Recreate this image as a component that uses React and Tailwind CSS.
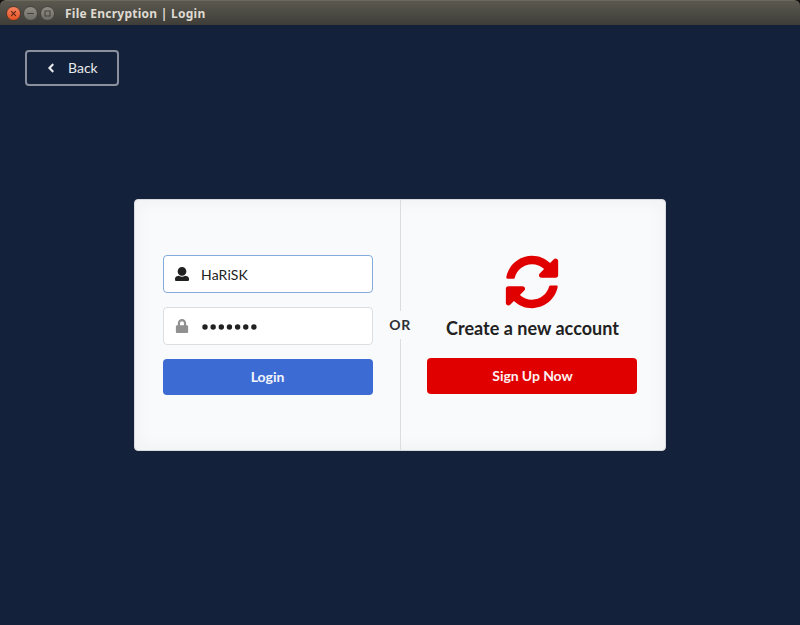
import React from "react";
import { FaAngleLeft, FaLock, FaSyncAlt } from "react-icons/fa";

function WindowButton({ close, children }) {
  return (
    <span
      className={
        "flex size-[15px] items-center justify-center rounded-full border " +
        (close
          ? "border-[#56382c] bg-linear-to-b from-[#f58360] to-[#e4501c]"
          : "border-[#45433d] bg-linear-to-b from-[#918e85] to-[#6e6c65]")
      }
    >
      <svg viewBox="0 0 13 13" className="size-[13px] shrink-0" fill="none" stroke={close ? "#5c2412" : "#45443e"} strokeWidth="1.1">
        {children}
      </svg>
    </span>
  );
}

function TitleBar() {
  return (
    <div className="bg-[#14110f]">
      <header className="flex h-[25px] items-center rounded-t-[6px] border-t border-[#6b685d] bg-linear-to-b from-[#5b594f] to-[#3e3d38] pl-[6px]">
        <div className="flex gap-[2px]">
          <WindowButton close>
            <path d="M4.2 4.2l4.6 4.6M8.8 4.2l-4.6 4.6" />
          </WindowButton>
          <WindowButton>
            <path d="M3.2 6.5h6.6" />
          </WindowButton>
          <WindowButton>
            <path d="M4 4h5v5H4z" />
          </WindowButton>
        </div>
        <h1 className="ml-[10px] mt-px whitespace-nowrap font-['Noto_Sans',sans-serif] text-[12px] font-bold leading-[24px] tracking-[0.25px] text-[#dfdbd2]">
          File Encryption | Login
        </h1>
      </header>
    </div>
  );
}

function UserIcon() {
  return (
    <svg viewBox="0 0 512 512" className="size-[14px]" fill="currentColor">
      <path d="M256 0c88.366 0 160 71.634 160 160s-71.634 160-160 160S96 248.366 96 160 167.634 0 256 0zm183.283 333.821l-71.313-17.828c-74.923 53.89-165.738 41.864-223.94 0l-71.313 17.828C29.981 344.505 0 382.903 0 426.955V464c0 26.51 21.49 48 48 48h416c26.51 0 48-21.49 48-48v-37.045c0-44.052-29.981-82.45-72.717-93.134z" />
    </svg>
  );
}

function PasswordDots() {
  return (
    <svg viewBox="0 0 58 6" className="mt-[2px] h-[6px] w-[58px]" fill="#212121" aria-label="Password">
      {Array.from({ length: 7 }, (_, i) => (
        <circle key={i} cx={4 + i * 8.15} cy="3" r="2.7" />
      ))}
    </svg>
  );
}

function Field({ icon, focused, children }) {
  return (
    <div
      className={
        "flex h-[38px] items-center rounded-[4px] border bg-white pl-[10px] " +
        (focused ? "border-[#82abdc]" : "border-[#dededf]")
      }
    >
      <span className={"flex w-4 justify-center " + (focused ? "text-[#212121]" : "text-[#909090]")}>{icon}</span>
      <span className="ml-[11px] text-[14px] leading-[17px] tracking-[0.15px] text-[#212121]">{children}</span>
    </div>
  );
}

export default function App() {
  return (
    <div className="flex h-[625px] w-[800px] flex-col overflow-hidden bg-[#14213a] font-[Lato,'Liberation_Sans',sans-serif]">
      <TitleBar />
      <main className="flex flex-1 flex-col items-start pl-[25px] pt-[25px]">
        <button className="flex h-[36px] w-[94px] items-center rounded-[4px] border-2 border-[#8a909d] pl-[16.5px] text-[14px] leading-[14px] text-[#e8e9ec]">
          <span className="flex w-[15px] justify-center">
            <FaAngleLeft className="size-[14px]" />
          </span>
          <span className="ml-[9.5px]">Back</span>
        </button>

        <section className="ml-[109px] mt-[113px] flex h-[252px] w-[532px] rounded-[4px] border border-[#d8dadd] bg-[#f9fafc] shadow-[inset_0_0_18px_rgba(34,36,38,0.05)]">
          <form className="flex w-[238px] flex-col pl-[28px] pt-[55px]">
            <Field focused icon={<UserIcon />}>
              HaRiSK
            </Field>
            <div className="mt-[14px]">
              <Field icon={<FaLock className="size-[14px]" />}>
                <PasswordDots />
              </Field>
            </div>
            <button type="button" className="mt-[14px] h-[36px] rounded-[4px] bg-[#3d6bd4] pr-px text-[14px] font-bold leading-[14px] text-[#f3f5fb]">
              Login
            </button>
          </form>

          <div className="flex w-[54px] flex-col items-center">
            <span className="ml-px w-px flex-1 bg-[#dcddde]" />
            <span className="flex h-[28px] items-center text-[14px] font-bold leading-[14px] tracking-[0.5px] text-[#2e2f33]">
              OR
            </span>
            <span className="ml-px w-px flex-1 bg-[#dcddde]" />
          </div>

          <div className="flex w-[210px] flex-col items-center pt-[55px]">
            <FaSyncAlt className="mr-px size-[54px] text-[#e00000]" />
            <h2 className="mt-[8px] whitespace-nowrap pl-px text-[18px] font-bold leading-[23px] tracking-[0.02px] text-[#212121]">
              Create a new account
            </h2>
            <button type="button" className="mt-[18px] h-[36px] w-[210px] rounded-[4px] bg-[#e00000] pl-px text-[14px] font-bold leading-[14px] tracking-[-0.08px] text-[#fdf0f0]">
              Sign Up Now
            </button>
          </div>
        </section>
      </main>
    </div>
  );
}
